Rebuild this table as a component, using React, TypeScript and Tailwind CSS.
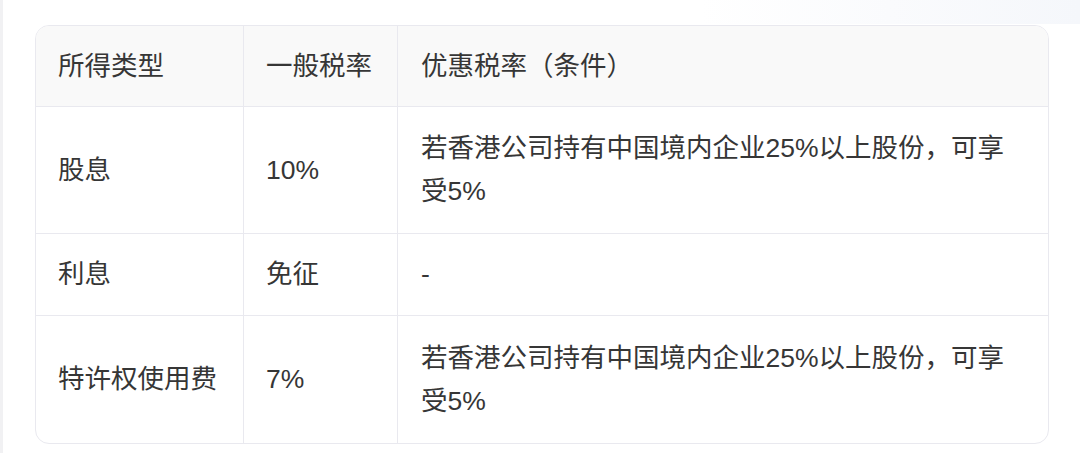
import React from 'react';

const rows = [
  { id: 1, type: "股息", rate: "10%", cond: "若香港公司持有中国境内企业25%以上股份，可享受5%", h: "h-[127px]" },
  { id: 2, type: "利息", rate: "免征", cond: "-", h: "h-[82px]" },
  { id: 3, type: "特许权使用费", rate: "7%", cond: "若香港公司持有中国境内企业25%以上股份，可享受5%", h: "h-[127px]" }
];

const cell = "flex items-center px-[22px] border-r border-[#e9e9ef]";

const App = () => {
  return (
    <div
      className="relative w-[1080px] h-[453px] bg-white overflow-hidden"
      style={{ fontFamily: '"Liberation Sans", "Noto Sans CJK SC", sans-serif' }}
    >
      {/* left gutter strip */}
      <div className="absolute left-0 top-0 h-full w-[3px] bg-[#f1f1f3]"></div>
      {/* faint top-right wash */}
      <div className="absolute right-0 top-0 w-[380px] h-[24px] bg-gradient-to-l from-[#f5f7fb] to-white/0"></div>

      <div className="relative ml-[35px] mt-[25px] w-[1014px] rounded-[14px] border border-[#e9e9ef] overflow-hidden text-[26.5px] leading-[43px] text-[#363636]">
        {/* Header */}
        <div className="grid grid-cols-[208px_154px_1fr] h-[81px] bg-[#f9f9f9] border-b border-[#e9e9ef]">
          <div className={cell}>所得类型</div>
          <div className={cell}>一般税率</div>
          <div className="flex items-center px-[23px]">优惠税率（条件）</div>
        </div>

        {rows.map((row, i) => (
          <div
            key={row.id}
            className={`grid grid-cols-[208px_154px_1fr] ${row.h} ${i < rows.length - 1 ? "border-b border-[#e9e9ef]" : ""}`}
          >
            <div className={cell}>{row.type}</div>
            <div className={cell}>{row.rate}</div>
            <div className="flex items-center px-[23px] pr-[36px]">
              <p>{row.cond}</p>
            </div>
          </div>
        ))}
      </div>
    </div>
  );
};

export default App;
